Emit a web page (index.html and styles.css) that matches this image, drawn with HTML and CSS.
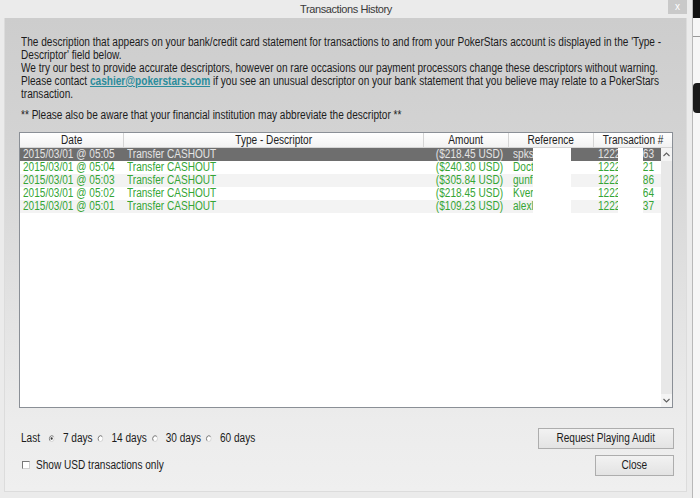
FILE: index.html
```html
<!DOCTYPE html>
<html>
<head>
<meta charset="utf-8">
<title>Transactions History</title>
<link rel="stylesheet" href="styles.css">
</head>
<body>
<div class="screen">
  <div class="window">
    <div class="titlebar">
      <span class="spacer"></span>
      <span class="title">Transactions History</span>
      <span class="close">x</span>
    </div>
    <div class="panel">
      <div class="info">
        <p class="lines">The description that appears on your bank/credit card statement for transactions to and from your PokerStars account is displayed in the 'Type -<br>Descriptor' field below.<br>We try our best to provide accurate descriptors, however on rare occasions our payment processors change these descriptors without warning.<br>Please contact <a class="mail" href="#">cashier@pokerstars.com</a> if you see an unusual descriptor on your bank statement that you believe may relate to a PokerStars<br>transaction.</p>
        <p class="lines note">** Please also be aware that your financial institution may abbreviate the descriptor **</p>
      </div>
      <div class="list">
        <div class="head">
          <span class="hc"><span class="sq mid">Date</span></span>
          <span class="hc"><span class="sq mid">Type - Descriptor</span></span>
          <span class="hc"><span class="sq mid">Amount</span></span>
          <span class="hc"><span class="sq mid">Reference</span></span>
          <span class="hc last"><span class="sq mid">Transaction #</span></span>
        </div>
        <div class="listbody">
          <div class="rows">
            <div class="row sel"><span class="c"><span class="sq">2015/03/01 @ 05:05</span></span><span class="c"><span class="sq">Transfer CASHOUT</span></span><span class="c amt"><span class="sq end">($218.45 USD)</span></span><span class="c ref"><span class="sq">spkstar</span></span><span class="c tx"><span class="sq">1222874163</span></span></div>
            <div class="row"><span class="c"><span class="sq">2015/03/01 @ 05:04</span></span><span class="c"><span class="sq">Transfer CASHOUT</span></span><span class="c amt"><span class="sq end">($240.30 USD)</span></span><span class="c ref"><span class="sq">Doctor8</span></span><span class="c tx"><span class="sq">1222874021</span></span></div>
            <div class="row alt"><span class="c"><span class="sq">2015/03/01 @ 05:03</span></span><span class="c"><span class="sq">Transfer CASHOUT</span></span><span class="c amt"><span class="sq end">($305.84 USD)</span></span><span class="c ref"><span class="sq">gunfire</span></span><span class="c tx"><span class="sq">1222873986</span></span></div>
            <div class="row"><span class="c"><span class="sq">2015/03/01 @ 05:02</span></span><span class="c"><span class="sq">Transfer CASHOUT</span></span><span class="c amt"><span class="sq end">($218.45 USD)</span></span><span class="c ref"><span class="sq">Kverty1</span></span><span class="c tx"><span class="sq">1222873864</span></span></div>
            <div class="row alt"><span class="c"><span class="sq">2015/03/01 @ 05:01</span></span><span class="c"><span class="sq">Transfer CASHOUT</span></span><span class="c amt"><span class="sq end">($109.23 USD)</span></span><span class="c ref"><span class="sq">alexlee</span></span><span class="c tx"><span class="sq">1222873737</span></span></div>
            <div class="mask mask-ref"></div>
            <div class="mask mask-tx"></div>
          </div>
          <div class="vscroll">
            <span class="arrow"><svg width="7" height="5" viewBox="0 0 7 5"><path d="M0.5 4 L3.5 1 L6.5 4" fill="none" stroke="#606060" stroke-width="1.1"/></svg></span>
            <span class="track"></span>
            <span class="arrow"><svg width="7" height="5" viewBox="0 0 7 5"><path d="M0.5 1 L3.5 4 L6.5 1" fill="none" stroke="#606060" stroke-width="1.1"/></svg></span>
          </div>
        </div>
      </div>
      <div class="controls">
        <div class="options">
          <div class="period">
            <span class="lbl">Last</span>
            <span class="radio"><svg width="7" height="7" viewBox="0 0 7 7"><circle cx="3.5" cy="3.5" r="3" fill="#fff" stroke="#cfcfcf"/><path d="M1.4 5.6 A3 3 0 0 1 5.6 1.4" fill="none" stroke="#777"/><circle cx="3.5" cy="3.5" r="1.2" fill="#333"/></svg>7 days</span>
            <span class="radio"><svg width="7" height="7" viewBox="0 0 7 7"><circle cx="3.5" cy="3.5" r="3" fill="#fff" stroke="#cfcfcf"/><path d="M1.4 5.6 A3 3 0 0 1 5.6 1.4" fill="none" stroke="#777"/></svg>14 days</span>
            <span class="radio"><svg width="7" height="7" viewBox="0 0 7 7"><circle cx="3.5" cy="3.5" r="3" fill="#fff" stroke="#cfcfcf"/><path d="M1.4 5.6 A3 3 0 0 1 5.6 1.4" fill="none" stroke="#777"/></svg>30 days</span>
            <span class="radio"><svg width="7" height="7" viewBox="0 0 7 7"><circle cx="3.5" cy="3.5" r="3" fill="#fff" stroke="#cfcfcf"/><path d="M1.4 5.6 A3 3 0 0 1 5.6 1.4" fill="none" stroke="#777"/></svg>60 days</span>
          </div>
          <div class="usd"><span class="check"></span><span class="sq">Show USD transactions only</span></div>
        </div>
        <div class="buttons">
          <span class="btn wide"><span class="sq mid">Request Playing Audit</span></span>
          <span class="btn"><span class="sq mid">Close</span></span>
        </div>
      </div>
    </div>
  </div>
  <div class="desktop">
    <span class="d-black"></span>
    <span class="d-line"></span>
    <span class="d-blob"></span>
    <span class="d-fill"></span>
  </div>
</div>
</body>
</html>
```

FILE: styles.css
```css
html, body {
  margin: 0;
  padding: 0;
  background: #ffffff;
}
body {
  width: 700px;
  height: 498px;
  overflow: hidden;
  font-family: "Liberation Sans", Arial, sans-serif;
  font-size: 12px;
  color: #1c1c1c;
}
.screen {
  display: flex;
  width: 700px;
  height: 498px;
  overflow: hidden;
}
.window {
  width: 692px;
  height: 498px;
  background: #ebebeb;
  border-right: 1px solid #b8b8b8;
  display: flex;
  flex-direction: column;
  overflow: hidden;
}
.titlebar {
  height: 18px;
  display: grid;
  grid-template-columns: 1fr auto 1fr;
  align-items: start;
}
.title {
  font-size: 11px;
  letter-spacing: -0.4px;
  line-height: 18px;
  color: #3a3a3a;
}
.close {
  justify-self: end;
  margin-right: 5px;
  width: 19px;
  height: 14px;
  background: #c9c9c9;
  color: #ffffff;
  font-size: 10px;
  line-height: 13px;
  text-align: center;
}
.panel {
  margin: 0 5px 0 4px;
  height: 474px;
  box-sizing: border-box;
  padding: 18px 14px 0 15px;
  background: linear-gradient(to bottom, #cdcdcd 0%, #d3d3d3 25%, #e2e2e2 60%, #ececec 85%, #efefef 100%);
  border: 1px solid #dcdcdc;
  border-top: none;
}
.sq {
  display: inline-block;
  white-space: nowrap;
  transform: scaleX(0.84);
  transform-origin: left center;
}
.sq.mid {
  transform-origin: center center;
}
.sq.end {
  transform-origin: right center;
}
.info {
  margin-left: 1px;
}
.lines {
  margin: 0;
  line-height: 13px;
  white-space: nowrap;
  transform: scaleX(0.84);
  transform-origin: left top;
}
.lines.note {
  margin-top: 8px;
}
.mail {
  color: #2a8c9c;
  font-weight: bold;
  text-decoration: underline;
}
.list {
  margin-top: 10px;
  margin-left: -1px;
  width: 654px;
  height: 276px;
  box-sizing: border-box;
  border: 1px solid #8a8f96;
  background: #ffffff;
}
.head {
  display: grid;
  grid-template-columns: 104px 300px 85px 85px 78px;
  height: 15px;
  box-sizing: border-box;
  border-bottom: 1px solid #d5d5d5;
  background: linear-gradient(to bottom, #ffffff, #f2f2f2);
}
.hc {
  text-align: center;
  line-height: 14px;
  border-right: 1px solid #d5d5d5;
  color: #222;
  white-space: nowrap;
}
.hc.last {
  border-right: none;
}
.listbody {
  display: flex;
  height: 259px;
}
.rows {
  position: relative;
  flex: 1;
}
.row {
  display: grid;
  grid-template-columns: 104px 300px 85px 85px 67px;
  height: 13px;
  line-height: 13px;
  color: #35a535;
  background: #ffffff;
}
.row.alt {
  background: #f3f3f3;
}
.row.sel {
  background: #6e6e6e;
  color: #e4e4e4;
}
.c {
  padding-left: 3px;
  white-space: nowrap;
  overflow: hidden;
}
.c.amt {
  display: flex;
  justify-content: flex-end;
  padding-right: 6px;
  padding-left: 0;
}
.c.ref, .c.tx {
  padding-left: 4px;
}
.mask {
  position: absolute;
  top: 0;
  height: 65px;
  background: #ffffff;
}
.mask-ref {
  left: 513px;
  width: 38px;
}
.mask-tx {
  left: 598px;
  width: 25px;
}
.vscroll {
  width: 11px;
  display: flex;
  flex-direction: column;
  background: #e8e8e8;
}
.arrow {
  height: 13px;
  display: flex;
  align-items: center;
  justify-content: center;
  background: #f4f4f4;
}
.track {
  flex: 1;
}
.controls {
  display: flex;
  justify-content: space-between;
  align-items: flex-start;
  margin-top: 20px;
  margin-right: -2px;
}
.options {
  padding-top: 3px;
  margin-left: 1px;
}
.period {
  display: flex;
  align-items: center;
  height: 14px;
  line-height: 14px;
  white-space: nowrap;
  transform: scaleX(0.84);
  transform-origin: left center;
}
.lbl {
  margin-right: 10.7px;
}
.radio {
  display: flex;
  align-items: center;
  margin-right: 6px;
}
.radio svg {
  margin-right: 9.5px;
}
.usd {
  display: flex;
  align-items: center;
  margin-top: 13px;
  height: 14px;
  line-height: 14px;
}
.check {
  width: 6px;
  height: 6px;
  margin: 0 6px 0 1px;
  background: #ffffff;
  border-top: 1px solid #777;
  border-left: 1px solid #777;
  border-right: 1px solid #d0d0d0;
  border-bottom: 1px solid #d0d0d0;
}
.buttons {
  display: flex;
  flex-direction: column;
  align-items: flex-end;
  gap: 6px;
}
.btn {
  display: block;
  width: 79px;
  height: 21px;
  box-sizing: border-box;
  border: 1px solid #adadad;
  background: linear-gradient(to bottom, #f2f2f2, #e3e3e3);
  text-align: center;
  line-height: 19px;
  color: #1c1c1c;
  white-space: nowrap;
}
.btn.wide {
  width: 136px;
}
.desktop {
  flex: 1;
  display: flex;
  flex-direction: column;
  background: #f6f6f6;
}
.d-black {
  height: 18px;
  background: #111;
}
.d-line {
  height: 1px;
  margin-top: 18px;
  background: #999;
}
.d-blob {
  height: 30px;
  margin-top: 46px;
  background: #1a1a1a;
  border-radius: 4px 0 0 4px;
}
.d-fill {
  flex: 1;
}
```
